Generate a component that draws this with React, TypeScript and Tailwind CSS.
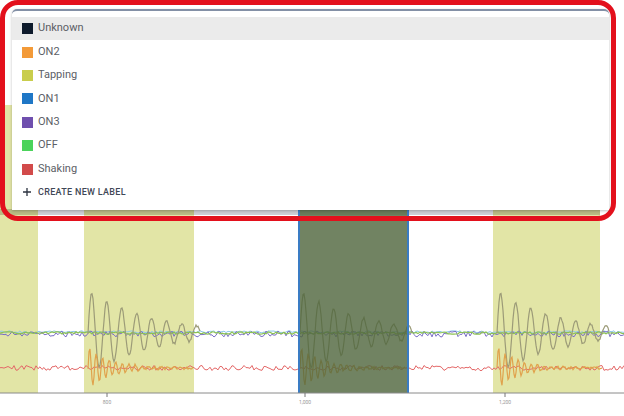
import React from "react";

interface Label {
  name: string;
  color: string;
}

const labels: Label[] = [
  { name: "Unknown", color: "#0e1b2c" },
  { name: "ON2", color: "#f39a38" },
  { name: "Tapping", color: "#c9cd4c" },
  { name: "ON1", color: "#1f77c6" },
  { name: "ON3", color: "#6f4fae" },
  { name: "OFF", color: "#4bd35b" },
  { name: "Shaking", color: "#d24a4a" },
];

// 固定シードの乱数（毎回同じ波形にする）
function rng(seed: number) {
  let a = seed;
  return () => {
    a |= 0;
    a = (a + 0x6d2b79f5) | 0;
    let t = Math.imul(a ^ (a >>> 15), 1 | a);
    t = (t + Math.imul(t ^ (t >>> 7), 61 | t)) ^ t;
    return ((t ^ (t >>> 14)) >>> 0) / 4294967296;
  };
}

const bursts = [88, 300, 497];

function noisePath(base: number, amp: number, seed: number) {
  const r = rng(seed);
  let d = "";
  for (let x = 0; x <= 624; x += 2) {
    const y = base + (r() - 0.5) * amp * 2;
    d += `${x === 0 ? "M" : "L"}${x} ${y.toFixed(1)} `;
  }
  return d;
}

function burstPath(
  start: number,
  base: number,
  amp: number,
  period: number,
  decay: number,
  len: number,
  seed: number
) {
  const r = rng(seed);
  let d = "";
  for (let i = 0; i <= len; i += 1) {
    const env = Math.exp(-i / decay);
    const y =
      base -
      amp * env * Math.sin((i / period) * Math.PI * 2) +
      (r() - 0.5) * 2.5;
    d += `${i === 0 ? "M" : "L"}${start + i} ${y.toFixed(1)} `;
  }
  return d;
}

const purpleLine = noisePath(334, 3, 11);
const blueLine = noisePath(332, 1.2, 12);
const greenLine = noisePath(333, 1.2, 13);
const redLine = noisePath(368, 2.5, 14);

function Chart() {
  return (
    <svg className="absolute inset-0" width={624} height={416}>
      {/* ラベル帯 */}
      <rect x={0} y={105} width={38} height={288} fill="#e2e5a6" />
      <rect x={84} y={105} width={110} height={288} fill="#e2e5a6" />
      <rect x={493} y={105} width={107} height={288} fill="#e2e5a6" />
      <rect x={0} y={209} width={600} height={6} fill="#cdcdd4" />
      <rect x={0} y={209} width={38} height={6} fill="#b9bb84" />
      <rect x={84} y={209} width={110} height={6} fill="#b9bb84" />
      <rect x={493} y={209} width={107} height={6} fill="#b9bb84" />

      {/* 波形 */}
      <path d={blueLine} stroke="#8cc8ea" strokeWidth={1} fill="none" />
      <path d={purpleLine} stroke="#7a6fc6" strokeWidth={1} fill="none" />
      <path d={greenLine} stroke="#8cc152" strokeWidth={1.2} fill="none" />
      <path d={redLine} stroke="#e46868" strokeWidth={1} fill="none" />
      {bursts.map((b, i) => (
        <g key={b}>
          <path
            d={burstPath(b, 333, 42, 15, 62, 112, 20 + i)}
            stroke="#9c9b78"
            strokeWidth={1.2}
            fill="none"
          />
          <path
            d={burstPath(b, 368, 22, 6.5, 22, 105, 30 + i)}
            stroke="#e0a24c"
            strokeWidth={1.2}
            fill="none"
          />
        </g>
      ))}

      {/* 選択中の帯 */}
      <rect x={298} y={105} width={110} height={288} fill="#52683f" opacity={0.82} />
      <rect x={298} y={105} width={2} height={288} fill="#3a7cc4" />
      <rect x={407} y={105} width={2} height={288} fill="#3a7cc4" />

      {/* X軸 */}
      <line x1={0} y1={393} x2={624} y2={393} stroke="#8a8a8a" strokeWidth={1} />
      {[
        { x: 107, t: "800" },
        { x: 305, t: "1,000" },
        { x: 505, t: "1,200" },
      ].map((tk) => (
        <g key={tk.t}>
          <line x1={tk.x} y1={393} x2={tk.x} y2={397} stroke="#777" strokeWidth={1} />
          <text
            x={tk.x}
            y={404}
            textAnchor="middle"
            fontSize={5}
            fill="#999"
            fontFamily="Roboto, sans-serif"
          >
            {tk.t}
          </text>
        </g>
      ))}
    </svg>
  );
}

export default function App() {
  return (
    <div className="relative w-[624px] h-[416px] bg-white overflow-hidden font-['Roboto','Liberation_Sans',sans-serif]">
      <Chart />

      {/* ラベル選択メニュー */}
      <div className="absolute left-[12px] top-[9px] w-[597px] h-[201px] bg-white border-t-2 border-[#8390a6] rounded-t-[5px] shadow-[0_1px_3px_rgba(0,0,0,0.25)] pt-[6px] flex flex-col">
        {labels.map((l, i) => (
          <div
            key={l.name}
            className={`h-[23.4px] flex items-center gap-[5px] pl-[10px] text-[11px] text-[#5c6066] ${
              i === 0 ? "bg-[#ebebeb]" : ""
            }`}
          >
            <span className="w-[11px] h-[11px] shrink-0" style={{ backgroundColor: l.color }} />
            <span>{l.name}</span>
          </div>
        ))}
        <div className="h-[23.4px] flex items-center gap-[6px] pl-[10px] text-[9px] font-medium tracking-[0.3px] text-[#3f4856]">
          <svg width={10} height={10} viewBox="0 0 10 10" className="shrink-0">
            <path d="M5 1v8M1 5h8" stroke="#2c3340" strokeWidth={1.3} />
          </svg>
          <span>CREATE NEW LABEL</span>
        </div>
      </div>

      {/* 注釈の赤枠 */}
      <div className="absolute left-[0px] top-[0px] w-[616px] h-[221px] border-[5px] border-[#e3101c] rounded-[18px]" />
    </div>
  );
}
